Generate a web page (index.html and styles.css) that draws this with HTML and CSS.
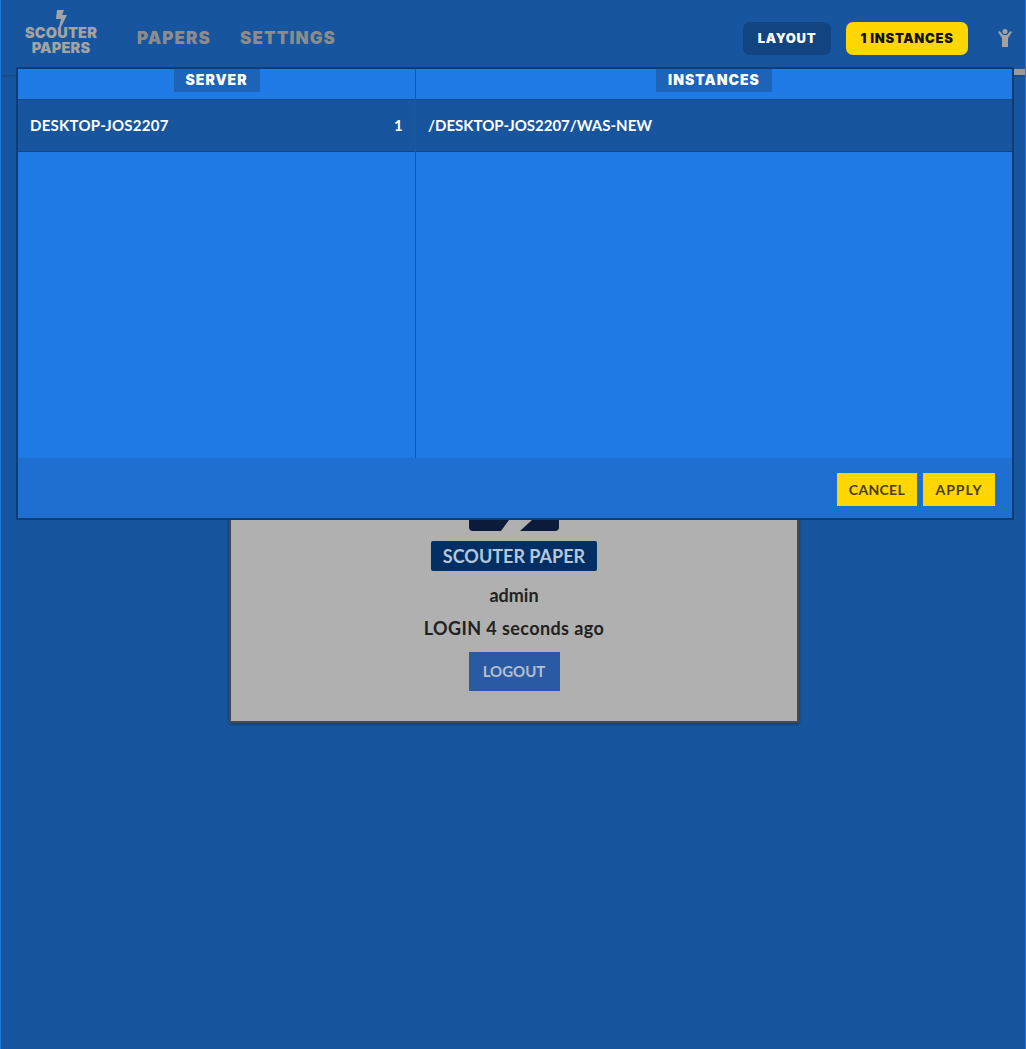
FILE: index.html
```html
<!DOCTYPE html>
<html>
<head>
  <title>Scouter Paper</title>
  <link rel="stylesheet" href="styles.css">
</head>
<body>
  <div class="topbar">
    <div class="logo">
      <svg class="logo-bolt" width="13" height="17" viewBox="0 0 13 17">
        <path d="M2 0H9L7 5H12L6 17H4L6 9H1Z" fill="#a3a3a3"/>
      </svg>
      <div class="logo-text">SCOUTER<br>PAPERS</div>
    </div>
    <div class="menu">
      <span class="menu-item">PAPERS</span>
      <span class="menu-item">SETTINGS</span>
    </div>
    <div class="topbar-right">
      <button class="top-btn layout-btn">LAYOUT</button>
      <button class="top-btn instances-btn">1 INSTANCES</button>
      <svg class="user-icon" width="14" height="18" viewBox="0 0 14 18">
        <circle cx="7" cy="2.5" r="2.5" fill="#a3a3a3"/>
        <path d="M0 3L1.5 2L5 6H9L12.5 2L14 3L10 9V18H4V9Z" fill="#a3a3a3"/>
      </svg>
    </div>
  </div>
  <div class="scroll-mark"></div>

  <div class="content">
    <div class="profile-card">
      <svg class="profile-logo" width="90" height="40" viewBox="0 0 90 40">
        <path d="M0 0H90V36Q90 40 86 40H51L63 29H40L32 40H4Q0 40 0 36Z" fill="#0d1b3a"/>
      </svg>
      <div class="profile-name">SCOUTER PAPER</div>
      <div class="profile-line admin-line">admin</div>
      <div class="profile-line login-line">LOGIN 4 seconds ago</div>
      <button class="logout-btn">LOGOUT</button>
    </div>
  </div>

  <div class="modal">
    <div class="modal-cols">
      <div class="col col-server">
        <div class="col-head"><span class="col-title">SERVER</span></div>
        <div class="row">
          <span>DESKTOP-JOS2207</span>
          <span>1</span>
        </div>
      </div>
      <div class="col col-instances">
        <div class="col-head"><span class="col-title">INSTANCES</span></div>
        <div class="row">
          <span>/DESKTOP-JOS2207/WAS-NEW</span>
        </div>
      </div>
    </div>
    <div class="modal-foot">
      <button class="foot-btn">CANCEL</button>
      <button class="foot-btn apply-btn">APPLY</button>
    </div>
  </div>
</body>
</html>
```

FILE: styles.css
```css
html, body {
  margin: 0;
  padding: 0;
  height: 100%;
  overflow: hidden;
}

body {
  position: relative;
  box-sizing: border-box;
  height: 1049px;
  background-color: #17569e;
  border: 1px solid #1f78e0;
  border-width: 0 1px 0 1px;
  font-family: "Lato", sans-serif;
  color: #fff;
}

button {
  border: 0;
  cursor: pointer;
  font-family: inherit;
}

.topbar {
  display: flex;
  align-items: center;
  height: 75px;
  box-sizing: border-box;
  padding: 0 13px 0 24px;
  background-color: #17569e;
  box-shadow: 0 1px 2px rgba(0, 0, 0, 0.2);
}

.logo {
  display: flex;
  flex-direction: column;
  align-items: center;
  width: 72px;
  color: #a3a3a3;
  margin-top: -11px;
}

.logo-bolt {
  margin-bottom: -2px;
}

.logo-text {
  font-family: "Inter", sans-serif;
  font-weight: 900;
  font-size: 14.5px;
  line-height: 15px;
  text-align: center;
  letter-spacing: 0.2px;
}

.menu {
  display: flex;
  gap: 29px;
  margin-left: 40px;
}

.menu-item {
  font-family: "Inter", sans-serif;
  font-weight: 900;
  font-size: 17px;
  letter-spacing: 1.1px;
  color: #8c8c8c;
}

.topbar-right {
  display: flex;
  align-items: center;
  margin-left: auto;
  margin-top: 2px;
}

.top-btn {
  height: 33px;
  padding: 0 0 2px;
  border-radius: 7px;
  font-family: "Inter", sans-serif;
  font-weight: 900;
  font-size: 13px;
  letter-spacing: 0.7px;
}

.layout-btn {
  width: 88px;
  background-color: #124482;
  color: #fff;
}

.instances-btn {
  width: 122px;
  margin-left: 15px;
  background-color: #ffd600;
  color: #111;
}

.user-icon {
  margin-left: 30px;
  margin-top: -2px;
}

.scroll-mark {
  position: absolute;
  top: 69px;
  right: -1px;
  width: 12px;
  height: 6px;
  background-color: #9a9a9a;
}

.content {
  display: flex;
  justify-content: center;
  padding-top: 345px;
}

.profile-card {
  display: flex;
  flex-direction: column;
  align-items: center;
  box-sizing: border-box;
  width: 570px;
  height: 303px;
  margin-left: 2px;
  padding-top: 71px;
  background-color: #b0b0b0;
  border: 2px solid #47494d;
  border-top-width: 0;
  box-shadow: 0 1px 3px rgba(0, 0, 0, 0.4);
  color: #222;
}

.profile-logo {
  display: block;
}

.profile-name {
  margin-top: 10px;
  padding: 0 12px;
  height: 30px;
  line-height: 30px;
  border-radius: 2px;
  background-color: #002f66;
  color: #b8c6d6;
  font-size: 18px;
  font-weight: 700;
}

.profile-line {
  height: 20px;
  line-height: 20px;
  font-size: 18px;
  font-weight: 700;
}

.admin-line {
  margin-top: 14px;
}

.login-line {
  margin-top: 13px;
  letter-spacing: 0.4px;
}

.logout-btn {
  margin-top: 14px;
  width: 91px;
  height: 39px;
  padding: 0 0 2px;
  background-color: #2a5aa3;
  color: #b4bfcf;
  font-size: 15px;
  font-weight: 700;
}

.modal {
  position: absolute;
  top: 67px;
  left: 15px;
  right: 11px;
  height: 453px;
  display: flex;
  flex-direction: column;
  box-sizing: border-box;
  border: 2px solid #0d3d73;
  background-color: #1e6fd0;
}

.modal-cols {
  display: flex;
  height: 389px;
  background-color: #1f7ae6;
}

.col {
  display: flex;
  flex-direction: column;
}

.col-server {
  width: 398px;
  border-right: 1px solid #1757a4;
  box-sizing: border-box;
}

.col-instances {
  flex: 1;
}

.col-head {
  display: flex;
  justify-content: center;
  height: 30px;
}

.col-title {
  height: 23px;
  line-height: 22px;
  padding: 0 12px;
  background-color: #1d63b8;
  font-family: "Inter", sans-serif;
  font-weight: 900;
  font-size: 14px;
  letter-spacing: 1px;
}

.row {
  display: flex;
  justify-content: space-between;
  align-items: center;
  height: 53px;
  box-sizing: border-box;
  padding: 0 12px 2px;
  background-color: #17569e;
  border-top: 1px solid #144c8e;
  border-bottom: 1px solid #124482;
  font-size: 15px;
  font-weight: 700;
  letter-spacing: 0.25px;
}

.col-instances .row {
  letter-spacing: 0;
}

.modal-foot {
  display: flex;
  justify-content: flex-end;
  gap: 6px;
  padding: 15px 17px 0 0;
}

.foot-btn {
  height: 33px;
  padding: 0 12px;
  background-color: #ffd600;
  color: #4a3d10;
  font-size: 14px;
  font-weight: 700;
  letter-spacing: 0.3px;
}

.apply-btn {
  width: 72px;
  padding: 0;
  letter-spacing: 1px;
}
```
